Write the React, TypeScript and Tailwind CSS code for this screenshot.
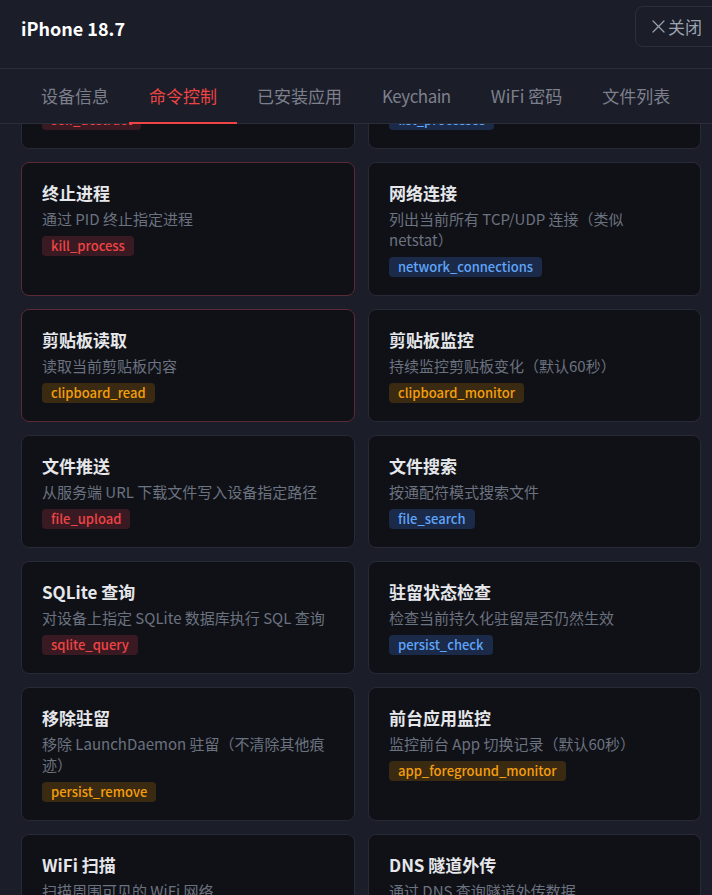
import React from "react";

type Tone = "red" | "blue" | "amber";

const badgeTone: Record<Tone, string> = {
  red: "bg-[#3a1a22] text-[#ef4444]",
  blue: "bg-[#1a2a48] text-[#60a5fa]",
  amber: "bg-[#3a2a12] text-[#f59e0b]",
};

type Cmd = { title: string; desc: string; cmd: string; tone: Tone; danger?: boolean };

const cmds: Cmd[] = [
  { title: "自毁", desc: "删除植入程序并清除所有痕迹", cmd: "self_destruct", tone: "red" },
  { title: "进程列表", desc: "列出设备上运行的所有进程", cmd: "list_processes", tone: "blue" },
  { title: "终止进程", desc: "通过 PID 终止指定进程", cmd: "kill_process", tone: "red", danger: true },
  { title: "网络连接", desc: "列出当前所有 TCP/UDP 连接（类似\nnetstat）", cmd: "network_connections", tone: "blue" },
  { title: "剪贴板读取", desc: "读取当前剪贴板内容", cmd: "clipboard_read", tone: "amber", danger: true },
  { title: "剪贴板监控", desc: "持续监控剪贴板变化（默认60秒）", cmd: "clipboard_monitor", tone: "amber" },
  { title: "文件推送", desc: "从服务端 URL 下载文件写入设备指定路径", cmd: "file_upload", tone: "red" },
  { title: "文件搜索", desc: "按通配符模式搜索文件", cmd: "file_search", tone: "blue" },
  { title: "SQLite 查询", desc: "对设备上指定 SQLite 数据库执行 SQL 查询", cmd: "sqlite_query", tone: "red" },
  { title: "驻留状态检查", desc: "检查当前持久化驻留是否仍然生效", cmd: "persist_check", tone: "blue" },
  { title: "移除驻留", desc: "移除 LaunchDaemon 驻留（不清除其他痕\n迹）", cmd: "persist_remove", tone: "amber" },
  { title: "前台应用监控", desc: "监控前台 App 切换记录（默认60秒）", cmd: "app_foreground_monitor", tone: "amber" },
  { title: "WiFi 扫描", desc: "扫描周围可见的 WiFi 网络", cmd: "wifi_scan", tone: "blue" },
  { title: "DNS 隧道外传", desc: "通过 DNS 查询隧道外传数据", cmd: "dns_exfiltrate", tone: "red" },
];

const tabs = [
  { label: "设备信息", cls: "" },
  { label: "命令控制", cls: "" },
  { label: "已安装应用", cls: "" },
  { label: "Keychain", cls: "tracking-[-0.5px]" },
  { label: "WiFi 密码", cls: "" },
  { label: "文件列表", cls: "" },
];

function Card({ c }: { c: Cmd }) {
  return (
    <div
      className={
        "rounded-lg border bg-[#101116] px-5 pt-5 pb-[18px] " +
        (c.danger ? "border-[#5a2a36]" : "border-[#272a37]")
      }
    >
      <div className="text-[17px] font-bold leading-5 text-[#e5e7eb]">{c.title}</div>
      <div className="mt-[5px] whitespace-pre-line text-[15px] leading-[21px] text-[#6b7280]">{c.desc}</div>
      <div className="mt-[7px] flex">
        <span className={"rounded px-[9px] text-[13px] font-medium leading-5 " + badgeTone[c.tone]}>
          {c.cmd}
        </span>
      </div>
    </div>
  );
}

export default function App() {
  return (
    <div className="flex h-[895px] w-[712px] flex-col overflow-hidden bg-[#1b1d29] font-['Noto_Sans_CJK_SC',sans-serif]">
      <div className="flex h-[69px] shrink-0 items-start justify-between border-b border-[#2a2d3a] pl-[21px]">
        <div className="mt-[16px] text-lg font-bold leading-6 text-white">iPhone 18.7</div>
        <button className="mt-[6px] -mr-[9px] flex h-[41px] w-[86px] shrink-0 items-center gap-[3px] rounded-lg border border-[#2c2f3d] pl-[16px] text-[17px] text-[#9ca3af]">
          <svg width="13" height="13" viewBox="0 0 13 13" fill="none" stroke="currentColor" strokeWidth="1.2" strokeLinecap="round">
            <path d="M1 1L12 12M12 1L1 12" />
          </svg>
          <span>关闭</span>
        </button>
      </div>
      <div className="flex h-[55px] shrink-0 border-b border-[#2a2d3a] pl-[21px]">
        {tabs.map((t, i) => (
          <div
            key={t.label}
            className={
              "relative flex shrink-0 items-center whitespace-nowrap px-5 text-[17px] " +
              t.cls +
              " " +
              (i === 1 ? "text-[#ef4444]" : "text-[#7d808c]")
            }
          >
            {t.label}
            {i === 1 && <div className="absolute bottom-[-1px] left-0 right-0 h-[2px] bg-[#ef4444]" />}
          </div>
        ))}
      </div>
      <div className="flex-1 overflow-hidden">
        <div className="-mt-[88px] grid grid-cols-[334px_333px] gap-[13px] pl-[21px]">
          {cmds.map((c) => (
            <Card key={c.cmd} c={c} />
          ))}
        </div>
      </div>
    </div>
  );
}
